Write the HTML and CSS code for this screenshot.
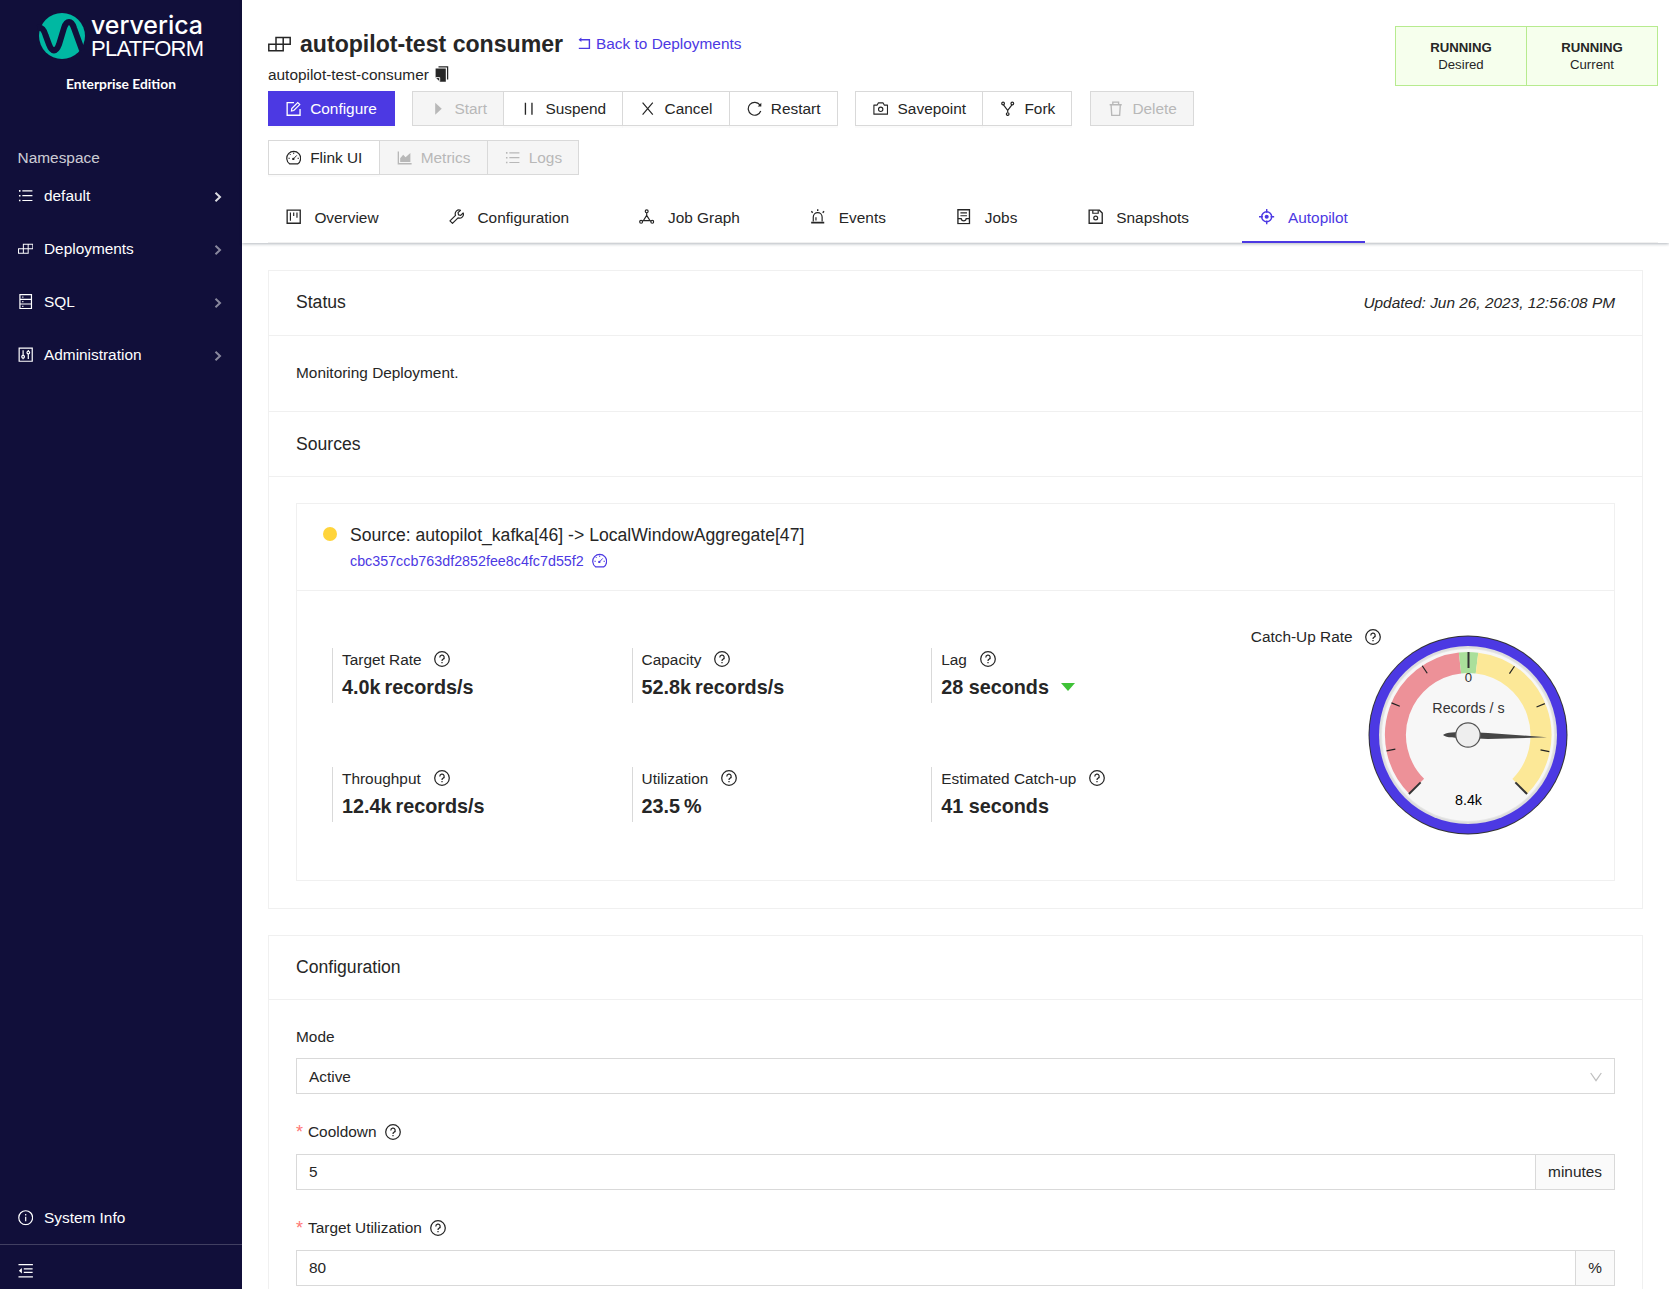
FILE: index.html
```html
<!DOCTYPE html>
<html lang="en">
    <head>
        <meta charset="UTF-8" />
        <meta name="viewport" content="width=device-width, initial-scale=1" />
        <title>autopilot-test consumer - Ververica Platform</title>
        <link rel="stylesheet" href="styles.css">
    </head>

    <body>
        <!-- Icon sprite -->
        <svg class="sprite" xmlns="http://www.w3.org/2000/svg">
            <symbol id="list" viewBox="0 0 16 16">
                <path d="M4.5 3h10.5M4.5 8h10.5M4.5 13h10.5" />
                <path d="M1 3h1.6M1 8h1.6M1 13h1.6" stroke-width="1.6" />
            </symbol>
            <symbol id="deploy" viewBox="0 0 23 16">
                <path d="M.8 8.2h14.4v6.6H.8zM8 1.4h14.2v6.8H8zM8 8.2v6.6M15.2 1.4v6.8" stroke-width="1.5" />
            </symbol>
            <symbol id="database" viewBox="0 0 16 16">
                <path d="M2 .7h12v14.6H2zM2 5.6h12M2 10.4h12" />
                <path d="M4.4 3.2h1.2M4.4 8h1.2M4.4 12.8h1.2" />
            </symbol>
            <symbol id="control" viewBox="0 0 16 16">
                <path d="M1.2 1.2h13.6v13.6H1.2zM5.3 3.5v5.2M5.3 11.6v1.2M10.7 3.2v1.2M10.7 7.3v5.3" />
                <circle cx="5.3" cy="10.1" r="1.4" />
                <circle cx="10.7" cy="5.8" r="1.4" />
            </symbol>
            <symbol id="chevron" viewBox="0 0 8 12">
                <path d="M1.5 1.8L6 6l-4.5 4.2" stroke-width="2" />
            </symbol>
            <symbol id="info" viewBox="0 0 16 16">
                <circle cx="8" cy="8" r="7.2" />
                <path d="M8 7v4.8M8 4.2v1.4" />
            </symbol>
            <symbol id="fold" viewBox="0 0 16 16">
                <path d="M.5 1.6h15M6 6.2h9.2M6 9.8h9.2M.5 14.4h15" />
                <path d="M4 5.2v5.6L.9 8z" fill="currentColor" stroke="none" />
            </symbol>
            <symbol id="back" viewBox="0 0 13 13">
                <path d="M1.8 2.8h9.6v8.6H.8" stroke-width="1.4" />
                <path d="M3.4.6v4.4L.6 2.8z" fill="currentColor" stroke="none" />
            </symbol>
            <symbol id="copy" viewBox="0 0 14 16">
                <path d="M3.5.9h9.1v12.6" />
                <path d="M.6 2.4h10.2v13.4H5L.6 11.4z" fill="currentColor" stroke="none" />
                <path d="M.8 11.6h3.9v3.9" stroke="#fff" stroke-width=".9" />
            </symbol>
            <symbol id="edit" viewBox="0 0 16 16">
                <path d="M8.3 1.7H1.2v13.1h13.4V8.2" stroke-width="1.4" />
                <path d="M6 7.8l6.2-6.2 2.1 2.1L8.1 9.9l-2.4.4z" />
            </symbol>
            <symbol id="play" viewBox="0 0 16 16">
                <path d="M5.4 1.8v12.4L12.2 8z" fill="currentColor" stroke="none" />
            </symbol>
            <symbol id="pause" viewBox="0 0 16 16">
                <path d="M4.6 1.8v12.4M11.4 1.8v12.4" stroke-width="1.4" />
            </symbol>
            <symbol id="cross" viewBox="0 0 16 16">
                <path d="M2.7 1.8l10.6 12.4M13.3 1.8L2.7 14.2" />
            </symbol>
            <symbol id="reload" viewBox="0 0 16 16">
                <path d="M13.4 4.1A6.7 6.7 0 1 0 14.3 10.4" />
                <path d="M14.9 1.9v3.8h-3.8z" fill="currentColor" stroke="none" />
            </symbol>
            <symbol id="camera" viewBox="0 0 17 16">
                <path d="M1 4h3.6L6 1.5h5L12.4 4H16v10H1z" stroke-linejoin="round" />
                <circle cx="8.5" cy="8.7" r="2.4" />
            </symbol>
            <symbol id="fork" viewBox="0 0 16 16">
                <circle cx="3.2" cy="2.6" r="1.4" />
                <circle cx="12.8" cy="2.6" r="1.4" />
                <circle cx="8" cy="13.6" r="1.4" />
                <path d="M3.6 4.1L8 9.8V12M12.4 4.1L8 9.8" />
            </symbol>
            <symbol id="trash" viewBox="0 0 16 16">
                <path d="M1.7 3.9h12.6M5 3.6V1.2h6v2.4M3.2 4l.7 10.9h8.2L12.8 4" stroke-width="1.4" />
            </symbol>
            <symbol id="dashboard" viewBox="0 0 16 16">
                <path d="M3.7 14.4a7.2 7.2 0 1 1 8.6 0z" />
                <path d="M7.8 9.2l3.4-3.6M8 2.6v1.6M3.9 4.2l1 1M2.5 8.6h1.5M12 8.6h1.5" stroke-width="1" />
                <circle cx="7.6" cy="9.3" r=".6" />
            </symbol>
            <symbol id="area" viewBox="0 0 16 16">
                <path d="M1.4 1.6v12.7h13.8" stroke-width="1.4" />
                <path d="M3.3 12.5V8.6L6.4 5l2.5 2.5L13.9 3v9.5z" fill="currentColor" stroke="none" />
            </symbol>
            <symbol id="project" viewBox="0 0 16 16">
                <path d="M1.2 1.2h13.6v13.6H1.2z" stroke-width="1.4" />
                <path d="M4.6 3.6v8.6M8 3.6v3.8M11.4 3.6V9" />
            </symbol>
            <symbol id="tool" viewBox="0 0 16 16">
                <path d="M11.9 1.3a4 4 0 0 0-5.1 5.3L1 12.4 3.6 15l5.8-5.8a4 4 0 0 0 5.3-5.1l-2.5 2.5-2.3-.5-.5-2.3z" stroke-linejoin="round" />
            </symbol>
            <symbol id="graph" viewBox="0 0 16 16">
                <circle cx="8" cy="2.4" r="1.5" />
                <circle cx="2.2" cy="13.3" r="1.5" />
                <circle cx="13.8" cy="13.3" r="1.5" />
                <path d="M8 4v3M8 6.6L4.6 12h6.8zM4.6 12l-1.2.6M11.4 12l1.2.6" />
            </symbol>
            <symbol id="alert" viewBox="0 0 16 16">
                <path d="M3.4 13V8.4a4.6 4.6 0 0 1 9.2 0V13M6.2 12V8.7" />
                <path d="M1.2 14.2h13.6" stroke-width="1.8" />
                <path d="M8 .2v2M1.4 2.4l1.4 1.4M14.6 2.4l-1.4 1.4" stroke-width="1.5" />
            </symbol>
            <symbol id="jobs" viewBox="0 0 16 16">
                <path d="M2 .8h12v14.4H2z" stroke-width="1.4" />
                <path d="M4.6 4h6.8M4.6 7h6.8M2 10h3.4c.4 3 4.8 3 5.2 0H14" />
            </symbol>
            <symbol id="save" viewBox="0 0 16 16">
                <path d="M1.2 1.2h10.6l3 3v10.6H1.2z" stroke-width="1.4" />
                <path d="M5 1.4v3h5.6v-3" />
                <circle cx="8" cy="9.4" r="2" />
            </symbol>
            <symbol id="aim" viewBox="0 0 16 16">
                <circle cx="8" cy="8" r="5.2" stroke-width="1.5" />
                <circle cx="8" cy="8" r="2.1" fill="currentColor" stroke="none" />
                <path d="M8 0v4M8 12v4M0 8h4M12 8h4" stroke-width="1.5" />
            </symbol>
            <symbol id="question" viewBox="0 0 16 16">
                <circle cx="8" cy="8" r="7.3" />
                <path d="M5.8 6.4a2.2 2.2 0 1 1 3.2 1.9c-.8.4-1 .7-1 1.6M8 11v1.3" />
            </symbol>
            <symbol id="down" viewBox="0 0 12 10">
                <path d="M.7 1L6 8.6 11.3 1" />
            </symbol>
        </svg>

        <div class="app">
            <aside class="sidebar">
                <div class="logo">
                    <svg width="170" height="50" viewBox="0 0 170 50">
                        <circle cx="25" cy="25" r="23" fill="#00b8a2" />
                        <path d="M.5 17C5 16 7 19 8.5 24l3.5 9.5c3 8 7 8 10 0L27 17c2.5-8 7.5-8 10 0l8 22" fill="none" stroke="#110f3a" stroke-width="6" />
                        <text class="logo-name" x="54" y="22.5" textLength="112" lengthAdjust="spacingAndGlyphs">ververica</text>
                        <text class="logo-sub" x="54" y="45" textLength="113">PLATFORM</text>
                    </svg>
                    <p>Enterprise Edition</p>
                </div>
                <div class="menu-label">Namespace</div>
                <ul class="menu">
                    <li class="current">
                        <svg class="icon"><use href="#list" /></svg>default
                        <svg class="arrow"><use href="#chevron" /></svg>
                    </li>
                    <li>
                        <svg class="icon"><use href="#deploy" /></svg>Deployments
                        <svg class="arrow"><use href="#chevron" /></svg>
                    </li>
                    <li>
                        <svg class="icon"><use href="#database" /></svg>SQL
                        <svg class="arrow"><use href="#chevron" /></svg>
                    </li>
                    <li>
                        <svg class="icon"><use href="#control" /></svg>Administration
                        <svg class="arrow"><use href="#chevron" /></svg>
                    </li>
                </ul>
                <div class="system-info"><svg class="icon"><use href="#info" /></svg>System Info</div>
                <div class="collapse"><svg class="icon"><use href="#fold" /></svg></div>
            </aside>

            <main>
                <header>
                    <div class="header-top">
                        <div class="header-left">
                            <div class="title-row">
                                <svg class="title-icon"><use href="#deploy" /></svg>
                                <h1>autopilot-test consumer</h1>
                                <a class="back" href="#"><svg><use href="#back" /></svg>Back to Deployments</a>
                            </div>
                            <div class="resource">autopilot-test-consumer <svg><use href="#copy" /></svg></div>
                            <div class="actions">
                                <div class="btn-group">
                                    <button class="primary"><svg class="icon"><use href="#edit" /></svg>Configure</button>
                                </div>
                                <div class="btn-group">
                                    <button disabled><svg class="icon"><use href="#play" /></svg>Start</button>
                                    <button><svg class="icon"><use href="#pause" /></svg>Suspend</button>
                                    <button><svg class="icon"><use href="#cross" /></svg>Cancel</button>
                                    <button><svg class="icon"><use href="#reload" /></svg>Restart</button>
                                </div>
                                <div class="btn-group">
                                    <button><svg class="icon"><use href="#camera" /></svg>Savepoint</button>
                                    <button><svg class="icon"><use href="#fork" /></svg>Fork</button>
                                </div>
                                <div class="btn-group">
                                    <button disabled><svg class="icon"><use href="#trash" /></svg>Delete</button>
                                </div>
                            </div>
                            <div class="actions links">
                                <div class="btn-group">
                                    <button><svg class="icon"><use href="#dashboard" /></svg>Flink UI</button>
                                    <button disabled><svg class="icon"><use href="#area" /></svg>Metrics</button>
                                    <button disabled><svg class="icon"><use href="#list" /></svg>Logs</button>
                                </div>
                            </div>
                        </div>
                        <div class="states">
                            <div><strong>RUNNING</strong>Desired</div>
                            <div><strong>RUNNING</strong>Current</div>
                        </div>
                    </div>
                    <nav class="tabs">
                        <a><svg class="icon"><use href="#project" /></svg>Overview</a>
                        <a><svg class="icon"><use href="#tool" /></svg>Configuration</a>
                        <a><svg class="icon"><use href="#graph" /></svg>Job Graph</a>
                        <a><svg class="icon"><use href="#alert" /></svg>Events</a>
                        <a><svg class="icon"><use href="#jobs" /></svg>Jobs</a>
                        <a><svg class="icon"><use href="#save" /></svg>Snapshots</a>
                        <a class="active"><svg class="icon"><use href="#aim" /></svg>Autopilot</a>
                    </nav>
                </header>

                <section class="card">
                    <div class="card-head status-head">
                        <h2>Status</h2>
                        <em>Updated: Jun 26, 2023, 12:56:08 PM</em>
                    </div>
                    <div class="status-text">Monitoring Deployment.</div>
                    <div class="card-head"><h2>Sources</h2></div>

                    <div class="source">
                        <div class="source-head">
                            <span class="dot"></span>
                            <div>
                                <h3>Source: autopilot_kafka[46] -&gt; LocalWindowAggregate[47]</h3>
                                <a href="#">cbc357ccb763df2852fee8c4fc7d55f2<svg class="icon"><use href="#dashboard" /></svg></a>
                            </div>
                        </div>
                        <div class="source-body">
                            <div class="stats">
                                <div class="stat">
                                    <p>Target Rate<svg class="help"><use href="#question" /></svg></p>
                                    <strong>4.0k<span class="unit">records/s</span></strong>
                                </div>
                                <div class="stat">
                                    <p>Capacity<svg class="help"><use href="#question" /></svg></p>
                                    <strong>52.8k<span class="unit">records/s</span></strong>
                                </div>
                                <div class="stat">
                                    <p>Lag<svg class="help"><use href="#question" /></svg></p>
                                    <strong>28 seconds<span class="trend-down"></span></strong>
                                </div>
                                <div class="stat">
                                    <p>Throughput<svg class="help"><use href="#question" /></svg></p>
                                    <strong>12.4k<span class="unit">records/s</span></strong>
                                </div>
                                <div class="stat">
                                    <p>Utilization<svg class="help"><use href="#question" /></svg></p>
                                    <strong>23.5<span class="unit">%</span></strong>
                                </div>
                                <div class="stat">
                                    <p>Estimated Catch-up<svg class="help"><use href="#question" /></svg></p>
                                    <strong>41 seconds</strong>
                                </div>
                            </div>
                            <div class="catch-up">
                                <p>Catch-Up Rate<svg class="help"><use href="#question" /></svg></p>
                                <svg class="gauge" width="200" height="200" viewBox="-100 -100 200 200">
                                    <circle r="99.5" fill="#333" />
                                    <circle r="98.5" fill="#4c39e3" />
                                    <circle r="89" fill="#ddd" />
                                    <circle r="87" fill="#e6e6e6" />
                                    <circle r="86" fill="#f7f7f7" />
                                    <g fill="none" stroke-width="21">
                                        <path d="M-51.3 51.3A72.5 72.5 0 0 1 -8 -72.06" stroke="#ed9198" />
                                        <path d="M-8 -72.06A72.5 72.5 0 0 1 9 -71.94" stroke="#aadf9b" />
                                        <path d="M9 -71.94A72.5 72.5 0 0 1 51.8 51.3" stroke="#fce897" />
                                    </g>
                                    <g stroke="#222" stroke-width="1.2">
                                        <path d="M.4 -83V-74" transform="rotate(-101.25)" />
                                        <path d="M.4 -83V-74" transform="rotate(-67.5)" />
                                        <path d="M.4 -83V-74" transform="rotate(-33.75)" />
                                        <path d="M.4 -83V-74" transform="rotate(33.75)" />
                                        <path d="M.4 -83V-74" transform="rotate(67.5)" />
                                        <path d="M.4 -83V-74" transform="rotate(101.25)" />
                                    </g>
                                    <g stroke="#333" stroke-width="2">
                                        <path d="M0 -83.5V-67" transform="rotate(-135)" />
                                        <path d="M.5 -83V-67" />
                                        <path d="M0 -83.5V-67" transform="rotate(135)" />
                                    </g>
                                    <text x=".5" y="-52.8" font-size="13.2" fill="#333">0</text>
                                    <text x=".5" y="-22" font-size="14.3" fill="#333">Records / s</text>
                                    <text x=".5" y="70" font-size="14.3" fill="#000">8.4k</text>
                                    <path d="M-25 0C-21 -3 -14 -3 0 -3L20 -2.1 79 2.3 20 4 0 3C-14 3 -21 3 -25 0z" fill="#464646" />
                                    <circle r="12.2" fill="#eee" stroke="#555" />
                                </svg>
                            </div>
                        </div>
                    </div>
                </section>

                <section class="card config">
                    <div class="card-head"><h2>Configuration</h2></div>
                    <form>
                        <label>Mode</label>
                        <div class="field select"><span>Active</span><svg><use href="#down" /></svg></div>
                        <label class="required">Cooldown<svg class="help"><use href="#question" /></svg></label>
                        <div class="field"><span>5</span><span class="addon">minutes</span></div>
                        <label class="required">Target Utilization<svg class="help"><use href="#question" /></svg></label>
                        <div class="field"><span>80</span><span class="addon">%</span></div>
                    </form>
                </section>
            </main>
        </div>
    </body>
</html>
```
FILE: styles.css
```css
* {
    box-sizing: border-box;
}
body {
    margin: 0;
    font-family: "Liberation Sans", Arial, sans-serif;
    font-size: 15.4px;
    line-height: 22px;
    color: #262626;
    background: #fff;
}
h1, h2, h3, p, ul {
    margin: 0;
    padding: 0;
}
a {
    color: #4c39e3;
    text-decoration: none;
}
svg {
    flex: none;
    fill: none;
    stroke: currentColor;
    stroke-width: 1.25;
}
.sprite {
    display: none;
}
.icon {
    width: 15.4px;
    height: 15.4px;
}
.app {
    display: flex;
    height: 100vh;
    overflow: hidden;
}

/* Sidebar */
.sidebar {
    display: flex;
    flex-direction: column;
    flex: none;
    width: 242px;
    background: #110f3a;
    color: #fff;
}
.logo {
    height: 147px;
    padding: 11px 0 0 37px;
}
.logo svg {
    display: block;
    overflow: visible;
    stroke: none;
}
.logo text {
    fill: #fff;
}
.logo-name {
    font-family: Inter, sans-serif;
    font-size: 25px;
    font-weight: 500;
}
.logo-sub {
    font-size: 22px;
}
.logo p {
    padding: 12px 0 0 29px;
    font-family: Lato, sans-serif;
    font-size: 13.8px;
    font-weight: 700;
}
.menu-label {
    padding-left: 17.6px;
    color: rgba(255, 255, 255, 0.8);
}
.menu {
    flex: 1;
    list-style: none;
}
.menu li {
    display: flex;
    align-items: center;
    height: 53px;
    padding: 0 20px 0 17.6px;
}
.menu .icon,
.system-info .icon {
    margin-right: 11px;
}
.arrow {
    width: 8px;
    height: 12px;
    margin: 2px 0 0 auto;
    opacity: 0.5;
}
.current .arrow {
    opacity: 0.85;
}
.system-info {
    display: flex;
    align-items: center;
    height: 54px;
    padding: 2px 0 0 17.6px;
}
.collapse {
    display: flex;
    align-items: center;
    height: 45px;
    padding: 8px 0 0 17.6px;
    border-top: 1px solid #413f61;
}

/* Header */
main {
    flex: 1;
    min-width: 0;
}
header {
    height: 243px;
    padding: 26px 11px 0 26px;
    box-shadow: 0 1px 3px rgba(0, 21, 41, 0.3);
}
.header-top {
    display: flex;
    justify-content: space-between;
    height: 166px;
}
.header-left {
    padding-top: 3px;
}
.title-row {
    display: flex;
    align-items: center;
    height: 30px;
}
.title-icon {
    width: 23px;
    height: 16px;
    margin-right: 9px;
}
h1 {
    font-size: 23.1px;
    line-height: 30px;
}
.back {
    margin-left: 15px;
}
.back svg {
    width: 13px;
    height: 13px;
    margin-right: 5px;
    vertical-align: -1px;
}
.resource {
    display: flex;
    align-items: center;
    height: 22px;
    margin-top: 5px;
}
.resource svg {
    width: 14px;
    height: 16px;
    margin: -2px 0 0 6px;
}
.actions {
    display: flex;
    gap: 17.8px;
    margin-top: 5px;
}
.actions.links {
    margin-top: 14px;
}
.btn-group {
    display: flex;
}
button {
    display: flex;
    align-items: center;
    gap: 8.8px;
    height: 35px;
    padding: 0 16.2px 0 17px;
    border: 1px solid #d9d9d9;
    background: #fff;
    box-shadow: 0 2px 0 rgba(0, 0, 0, 0.015);
    color: #262626;
    font: inherit;
}
button + button {
    margin-left: -1px;
}
button:disabled {
    background: #f5f5f5;
    box-shadow: none;
    color: #b8b8b8;
}
button.primary {
    padding-right: 16.6px;
    border-color: #4c39e3;
    background: #4c39e3;
    color: #fff;
}
.states {
    display: flex;
    height: 60px;
    border: 1px solid #b7eb8f;
    background: #f6ffed;
    font-size: 13.2px;
    line-height: 17px;
    text-align: center;
}
.states div {
    width: 130px;
    padding-top: 12px;
}
.states div + div {
    width: 131px;
    border-left: 1px solid #b7eb8f;
}
.states strong {
    display: block;
}
.tabs {
    display: flex;
    gap: 35.2px;
    height: 51px;
    border-bottom: 1px solid #f0f0f0;
}
.tabs a {
    display: flex;
    align-items: center;
    gap: 13.2px;
    height: 51px;
    padding: 0 17.6px;
    color: #262626;
}
.tabs a:first-child {
    padding-left: 17.8px;
}
.tabs .icon {
    margin-top: -1px;
}
.tabs a.active {
    color: #4c39e3;
    box-shadow: inset 0 -2px #4c39e3;
}

/* Cards */
.card {
    margin: 27px 26px 0;
    border: 1px solid #f0f0f0;
}
.card + .card {
    margin-top: 26px;
}
.card-head {
    display: flex;
    align-items: center;
    justify-content: space-between;
    height: 65px;
    padding: 0 27px;
    border-bottom: 1px solid #f0f0f0;
}
.status-head h2 {
    padding-bottom: 2px;
}
.config .card-head {
    height: 64px;
    padding-bottom: 1px;
}
h2, h3 {
    font-size: 17.6px;
    font-weight: 400;
}
.status-text {
    height: 76px;
    padding: 26px 27px 0;
    border-bottom: 1px solid #f0f0f0;
}
.source {
    height: 378px;
    margin: 26px 27px 27px;
    border: 1px solid #f0f0f0;
}
.source-head {
    display: flex;
    height: 87px;
    padding: 20px 26px 0;
    border-bottom: 1px solid #f0f0f0;
}
.dot {
    width: 14px;
    height: 14px;
    margin: 3px 13px 0 0;
    border-radius: 50%;
    background: #ffd43b;
}
.source-head a {
    display: flex;
    align-items: center;
    margin-top: 4px;
    font-size: 14.3px;
}
.source-head .icon {
    margin-left: 8px;
}
.source-body {
    display: flex;
    padding: 35px 0 0 35px;
}
.stats {
    display: grid;
    grid-template-columns: repeat(3, 299.6px);
    grid-auto-rows: 55px;
    row-gap: 64px;
    margin-top: 22px;
}
.stat {
    padding: 1px 0 0 9px;
    border-left: 1px solid #d9d9d9;
}
.stat p,
.catch-up p {
    display: flex;
    align-items: center;
}
.help {
    width: 16px;
    height: 16px;
    margin-left: 12.8px;
}
.stat .help {
    margin-top: -2px;
}
.stat strong {
    display: flex;
    align-items: center;
    margin-top: 3px;
    font-size: 19.8px;
    line-height: 26px;
}
.unit {
    margin-left: 4px;
}
.trend-down {
    margin-left: 12px;
    border: 7px solid transparent;
    border-top: 8px solid #3fc237;
    border-bottom: 0;
}
.catch-up {
    display: flex;
    align-items: flex-start;
    margin-left: 20px;
}
.catch-up .help {
    margin-left: 12px;
}
.gauge {
    margin: 8.5px 0 0 -12.5px;
    stroke: none;
}
.gauge text {
    text-anchor: middle;
}

/* Form */
form {
    padding: 26px 27px;
}
label {
    display: flex;
    align-items: center;
    height: 22px;
    margin-bottom: 10px;
}
label.required {
    margin-bottom: 11px;
}
label .help {
    margin-left: 8.5px;
}
.required::before {
    content: "*";
    width: 12px;
    color: #ff7875;
    font-size: 18px;
}
.field {
    display: flex;
    align-items: center;
    justify-content: space-between;
    height: 36px;
    margin-bottom: 27px;
    padding-left: 12px;
    border: 1px solid #d9d9d9;
}
.select span {
    padding-top: 2px;
}
.field svg {
    width: 12px;
    height: 10px;
    margin: 2px 12px 0 0;
    color: #bfbfbf;
}
.addon {
    padding: 6px 12px;
    border-left: 1px solid #d9d9d9;
    background: #fafafa;
}
```
